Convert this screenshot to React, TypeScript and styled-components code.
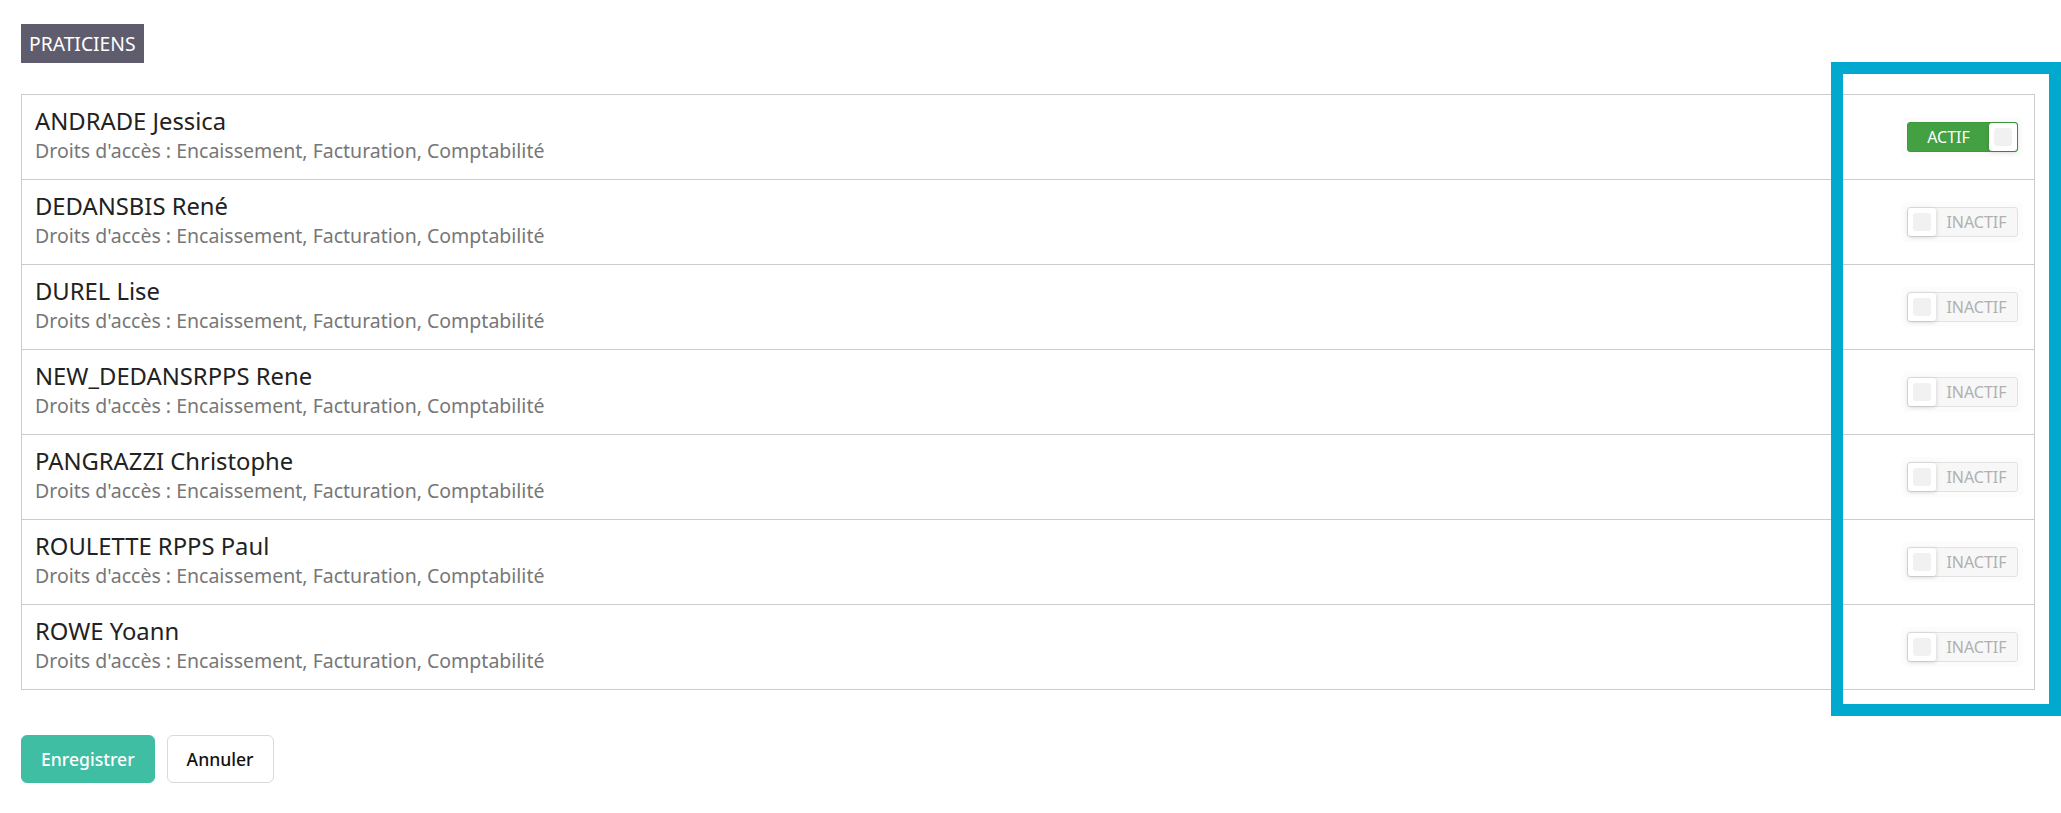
import React from "react";
import styled, { createGlobalStyle } from "styled-components";

const GlobalStyle = createGlobalStyle`
  html, body { margin: 0; padding: 0; background: #ffffff; }
  body { font-family: "Noto Sans", "Open Sans", Arial, sans-serif; }
  * { box-sizing: border-box; }
`;

const Page = styled.div`
  position: relative;
  padding: 24px 26px 30px 21px;
  min-height: 813px;
`;

const Tag = styled.div`
  display: inline-flex;
  align-items: center;
  height: 39px;
  padding: 0 8px;
  background: #5f5c6d;
  color: #ffffff;
  font-size: 19.3px;
`;

const List = styled.div`
  margin-top: 31px;
  border: 1px solid #cccccc;
  display: flex;
  flex-direction: column;
`;

const Row = styled.div`
  height: 85px;
  display: flex;
  align-items: center;
  justify-content: space-between;
  padding: 0 11px 0 13px;
  border-bottom: 1px solid #cccccc;
  &:last-child { border-bottom: none; height: 84px; }
`;

const Info = styled.div`
  display: flex;
  flex-direction: column;
  margin-bottom: 4px;
`;

const Name = styled.div`
  font-size: 23.8px;
  line-height: 32px;
  color: #222222;
`;

const Rights = styled.div`
  font-size: 19.5px;
  line-height: 28px;
  color: #777777;
`;

const Halo = styled.div`
  padding: 5px;
  border-radius: 5px;
  background: #fcfcfc;
`;

const Switch = styled.div<{ $on: boolean }>`
  width: 111px;
  height: 30px;
  border-radius: 3px;
  display: flex;
  flex-direction: ${(p) => (p.$on ? "row" : "row-reverse")};
  align-items: center;
  background: ${(p) => (p.$on ? "#43a143" : "#f7f7f7")};
  border: 1px solid ${(p) => (p.$on ? "#3b9a3b" : "#e2e2e2")};
`;

const SwitchLabel = styled.div<{ $on: boolean }>`
  flex: 1;
  text-align: center;
  font-size: 16px;
  line-height: 20px;
  color: ${(p) => (p.$on ? "#ffffff" : "#b0b0b0")};
`;

const Knob = styled.div`
  width: 28px;
  height: 28px;
  border-radius: 3px;
  background: #ffffff;
  box-shadow: 0 1px 4px rgba(0, 0, 0, 0.18);
  display: flex;
  align-items: center;
  justify-content: center;
`;

const KnobInner = styled.div`
  width: 18px;
  height: 18px;
  border-radius: 3px;
  background: #f1f1f1;
`;

const Actions = styled.div`
  margin-top: 45px;
  display: flex;
  gap: 12px;
`;

const Button = styled.button<{ $primary?: boolean }>`
  height: 48px;
  padding: 0 19px;
  border-radius: 6px;
  font-family: "Noto Sans", "Open Sans", Arial, sans-serif;
  font-size: 17.6px;
  font-weight: 500;
  cursor: pointer;
  background: ${(p) => (p.$primary ? "#40bea4" : "#ffffff")};
  color: ${(p) => (p.$primary ? "#ffffff" : "#111111")};
  border: 1px solid ${(p) => (p.$primary ? "#40bea4" : "#d9d9d9")};
`;

const Highlight = styled.div`
  position: absolute;
  left: 1831px;
  top: 62px;
  width: 230px;
  height: 654px;
  border: 12px solid #00a9cd;
  pointer-events: none;
`;

const people = [
  { name: "ANDRADE Jessica", on: true },
  { name: "DEDANSBIS René", on: false },
  { name: "DUREL Lise", on: false },
  { name: "NEW_DEDANSRPPS Rene", on: false },
  { name: "PANGRAZZI Christophe", on: false },
  { name: "ROULETTE RPPS Paul", on: false },
  { name: "ROWE Yoann", on: false },
];

export default function App() {
  return (
    <>
      <GlobalStyle />
      <Page>
        <Tag>PRATICIENS</Tag>
        <List>
          {people.map((p) => (
            <Row key={p.name}>
              <Info>
                <Name>{p.name}</Name>
                <Rights>Droits d'accès : Encaissement, Facturation, Comptabilité</Rights>
              </Info>
              <Halo>
                <Switch $on={p.on}>
                  <SwitchLabel $on={p.on}>{p.on ? "ACTIF" : "INACTIF"}</SwitchLabel>
                  <Knob>
                    <KnobInner />
                  </Knob>
                </Switch>
              </Halo>
            </Row>
          ))}
        </List>
        <Actions>
          <Button $primary>Enregistrer</Button>
          <Button>Annuler</Button>
        </Actions>
        <Highlight />
      </Page>
    </>
  );
}
